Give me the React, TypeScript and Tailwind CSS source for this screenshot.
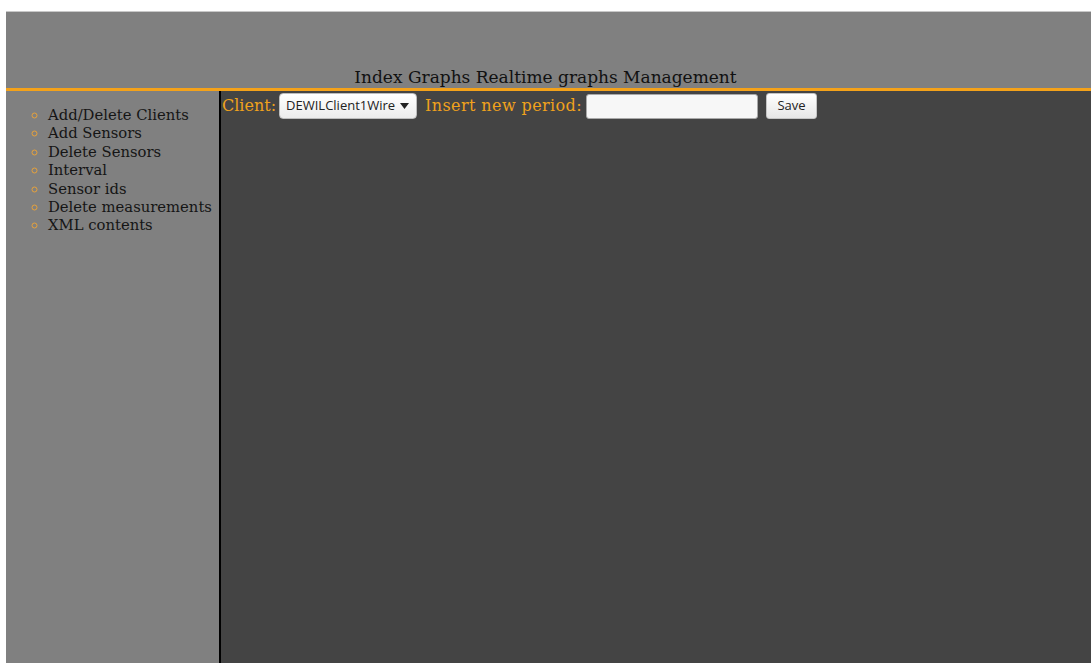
const menu = [
  'Add/Delete Clients',
  'Add Sensors',
  'Delete Sensors',
  'Interval',
  'Sensor ids',
  'Delete measurements',
  'XML contents',
]

const serif = "font-['DejaVu_Serif','Liberation_Serif',serif]"
const sans = "font-['Open_Sans','Noto_Sans',sans-serif]"

export default function App() {
  return (
    <div className={`h-[663px] overflow-hidden bg-white pl-[6px] pt-[11px] ${serif}`}>
      <div className="h-full border-t border-[#c8c8c8] flex flex-col">
        {/* top bar with the nav links */}
        <div className="h-[79px] shrink-0 bg-[#808080] flex items-end justify-center border-b-[3px] border-[#f4a21a]">
          <div className="text-[17px] leading-[20px] text-[#111] pb-[1px] pr-[6px]">
            Index Graphs Realtime graphs Management
          </div>
        </div>

        <div className="flex flex-1 min-h-0">
          <aside className="w-[215px] shrink-0 bg-[#808080] border-r-2 border-black pt-[15px]">
            <ul className="list-[circle] pl-[42px] marker:text-[#e8a23a] text-[14.8px] leading-[18.4px] text-[#151515] whitespace-nowrap">
              {menu.map((item) => (
                <li key={item}>{item}</li>
              ))}
            </ul>
          </aside>

          <main className="flex-1 bg-[#444444] pt-[2px]">
            <div className="flex items-center h-[26px] text-[16px] text-[#f0a21c]">
              <span className="pl-[1px]">Client:</span>
              <button className={`ml-[3px] h-[26px] w-[138px] flex items-center justify-between rounded-[4px] border border-[#bdbdbd] bg-gradient-to-b from-white to-[#ececec] pl-[6px] pr-[7px] text-[13px] text-[#222] ${sans}`}>
                <span>DEWILClient1Wire</span>
                <svg width="9" height="6" viewBox="0 0 9 6" className="fill-[#222]">
                  <path d="M0 0h9L4.5 6z" />
                </svg>
              </button>
              <span className="ml-[8px] tracking-[0.4px]">Insert new period:</span>
              <input
                className="ml-[4px] h-[25px] w-[172px] rounded-[3px] border border-[#a9a9a9] bg-[#f7f7f7] outline-none"
                type="text"
              />
              <button className={`ml-[8px] h-[26px] w-[51px] rounded-[3px] border border-[#c4c4c4] bg-gradient-to-b from-white to-[#e6e6e6] text-[13px] text-[#222] ${sans}`}>
                Save
              </button>
            </div>
          </main>
        </div>
      </div>
    </div>
  )
}
